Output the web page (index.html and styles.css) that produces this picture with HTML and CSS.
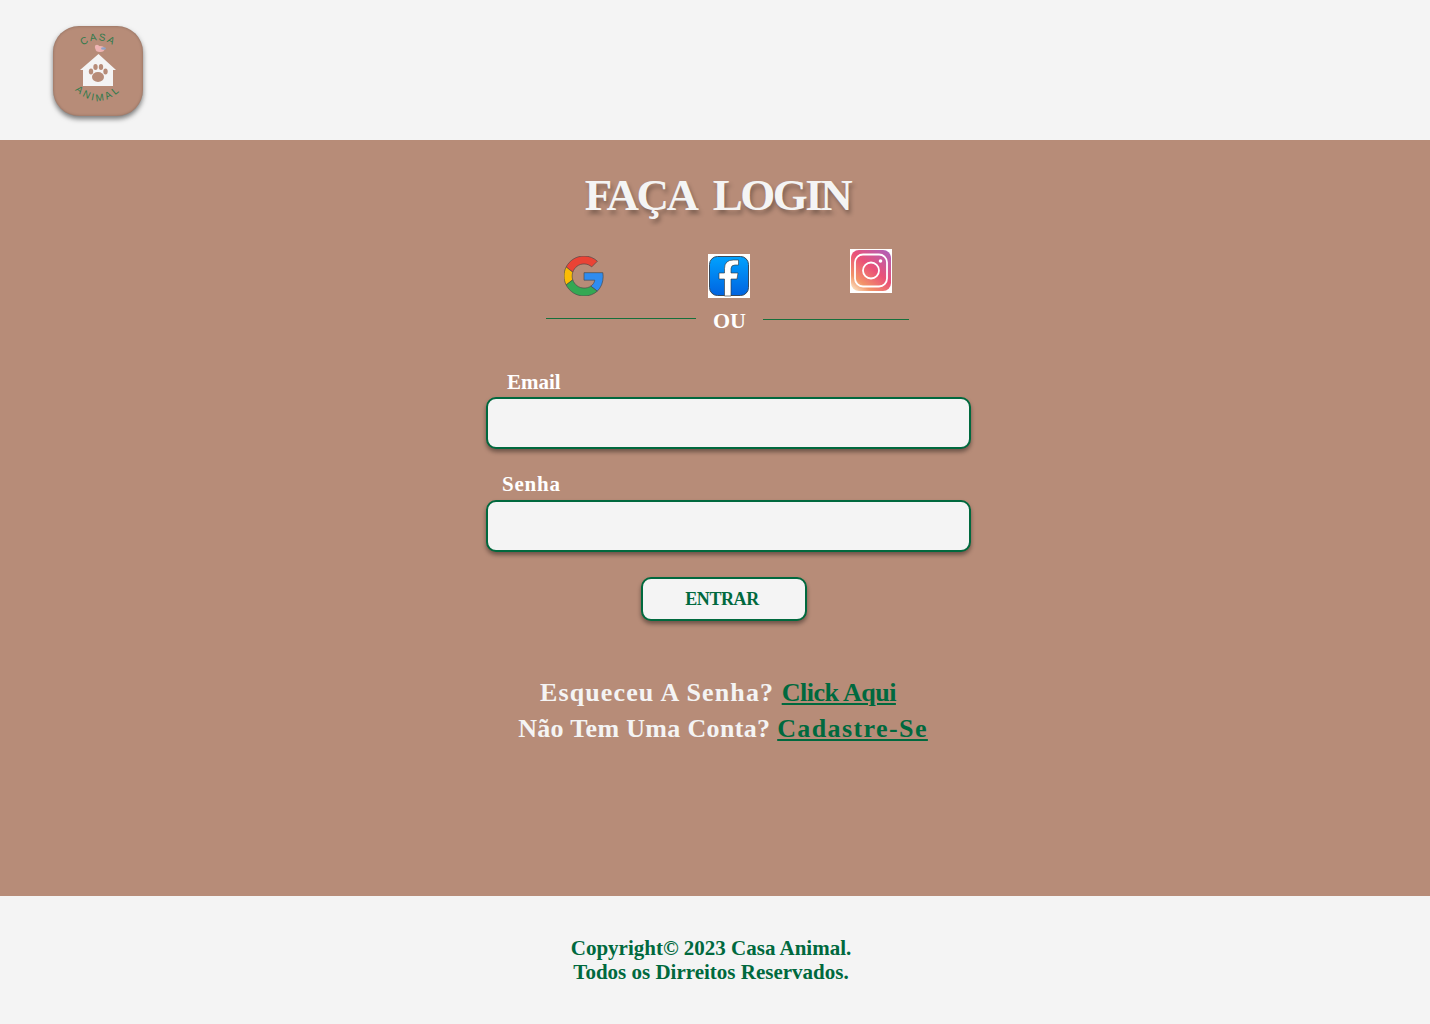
FILE: index.html
```html
<!DOCTYPE html>
<html lang="pt-BR">
<head>
    <meta charset="UTF-8">
    <meta name="viewport" content="width=device-width, initial-scale=1.0">
    <title>Casa Animal - Login</title>
    <link rel="stylesheet" href="styles.css">
</head>
<body>

<header class="topo">
    <div class="logo">
        <svg viewBox="0 0 90 90" width="90" height="90">
            <defs>
                <path id="arcoCima" d="M25 25 A24 24 0 0 1 65 25"/>
                <path id="arcoBaixo" d="M18 60 Q45 90 72 60"/>
            </defs>
            <text class="logo-texto"><textPath href="#arcoCima" startOffset="50%" text-anchor="middle">CASA</textPath></text>
            <text class="logo-texto logo-texto-baixo"><textPath href="#arcoBaixo" startOffset="50%" text-anchor="middle">ANIMAL</textPath></text>
            <ellipse cx="47" cy="23" rx="4.500" ry="3" fill="#eeb4b4"/>
            <circle cx="44" cy="21" r="2.200" fill="#eeb4b4"/>
            <ellipse cx="50.500" cy="22.500" rx="2.500" ry="1.300" fill="#8fa3c8"/>
            <path d="M45.500 28 L63 44 H60 V60 H30 V44 H27 Z" fill="#f4f4f4"/>
            <ellipse cx="45" cy="51" rx="6" ry="5" fill="#b78c78"/>
            <ellipse cx="38" cy="45.500" rx="2.200" ry="3" fill="#b78c78"/>
            <ellipse cx="42.500" cy="41" rx="2.200" ry="3" fill="#b78c78"/>
            <ellipse cx="48" cy="41" rx="2.200" ry="3" fill="#b78c78"/>
            <ellipse cx="52.500" cy="45.500" rx="2.200" ry="3" fill="#b78c78"/>
        </svg>
    </div>
</header>

<main class="principal">
    <h1>FAÇA LOGIN</h1>

    <div class="redes">
        <a href="#" class="rede rede-google">
            <svg viewBox="0 0 48 48" width="40" height="40">
                <g stroke="#4a4a4a" stroke-width="0.8">
                    <path fill="#ea4335" d="M24 9.5c3.54 0 6.71 1.22 9.21 3.6l6.85-6.85C35.9 2.38 30.47 0 24 0 14.62 0 6.51 5.38 2.56 13.22l7.98 6.19C12.43 13.72 17.74 9.5 24 9.5z"/>
                    <path fill="#2f8cf0" d="M46.98 24.55c0-1.57-.15-3.09-.38-4.55H24v9.02h12.94c-.58 2.96-2.26 5.48-4.78 7.18l7.73 6c4.51-4.18 7.09-10.36 7.09-17.65z"/>
                    <path fill="#fbbc05" d="M10.53 28.59c-.48-1.45-.76-2.99-.76-4.59s.27-3.14.76-4.59l-7.98-6.19C.92 16.46 0 20.12 0 24c0 3.88.92 7.54 2.56 10.78l7.97-6.19z"/>
                    <path fill="#34a853" d="M24 48c6.48 0 11.93-2.13 15.89-5.81l-7.73-6c-2.15 1.45-4.92 2.3-8.16 2.3-6.26 0-11.57-4.22-13.47-9.91l-7.98 6.19C6.51 42.62 14.62 48 24 48z"/>
                </g>
            </svg>
        </a>
        <a href="#" class="rede rede-face">
            <svg viewBox="0 0 42 44" width="42" height="44">
                <defs>
                    <linearGradient id="azulFace" x1="0" y1="0" x2="0" y2="1">
                        <stop offset="0" stop-color="#00a2ff"/>
                        <stop offset="1" stop-color="#0063e0"/>
                    </linearGradient>
                </defs>
                <rect width="42" height="44" fill="#fff"/>
                <rect x="1.5" y="2.5" width="39" height="39" rx="8" fill="url(#azulFace)" stroke="#3a4a5a"/>
                <path d="M23 42 V25 H29 L30 19 H23 V14.500 Q23 11 27 11 H30.500 V6 H25.500 Q16.500 6 16.500 14.500 V19 H11 V25 H16.500 V42 Z" fill="#fff" stroke="#333" stroke-width="0.6"/>
            </svg>
        </a>
        <a href="#" class="rede rede-insta">
            <svg viewBox="0 0 42 44" width="42" height="44">
                <defs>
                    <linearGradient id="corInsta" x1="0.9" y1="0" x2="0.1" y2="1">
                        <stop offset="0" stop-color="#b060b8"/>
                        <stop offset="0.45" stop-color="#ea5078"/>
                        <stop offset="0.8" stop-color="#f29468"/>
                        <stop offset="1" stop-color="#fbe0c0"/>
                    </linearGradient>
                </defs>
                <rect width="42" height="44" fill="#fff"/>
                <rect x="1" y="1" width="40" height="41" rx="8" fill="url(#corInsta)"/>
                <rect x="5" y="5.500" width="32" height="32" rx="8" fill="none" stroke="#fff" stroke-width="1.800"/>
                <circle cx="21" cy="21.500" r="8" fill="none" stroke="#fff" stroke-width="1.800"/>
                <circle cx="30.500" cy="12" r="1.800" fill="#fff"/>
            </svg>
        </a>
    </div>

    <div class="divisor">
        <span class="linha linha-esq"></span>
        <span class="ou">OU</span>
        <span class="linha linha-dir"></span>
    </div>

    <form class="formulario">
        <label for="email" class="rotulo-email">Email</label>
        <input type="email" id="email">
        <label for="senha" class="rotulo-senha">Senha</label>
        <input type="password" id="senha">
        <button type="button">ENTRAR</button>
    </form>

    <div class="ajuda">
        <p class="ajuda-senha">Esqueceu A Senha? <a href="#">Click Aqui</a></p>
        <p class="ajuda-conta">Não Tem Uma Conta? <a href="#">Cadastre-Se</a></p>
    </div>
</main>

<footer class="rodape">
    <p>Copyright© 2023 Casa Animal.<br>Todos os Dirreitos Reservados.</p>
</footer>

</body>
</html>
```
FILE: styles.css
```css
* {
    box-sizing: border-box;
}
body {
    margin: 0;
    font-family: "Liberation Serif", serif;
    background-color: #f4f4f4;
}
.topo {
    height: 140px;
    padding: 26px 53px 0;
}
.logo {
    width: 90px;
    height: 90px;
    border-radius: 26px;
    background-color: #b78c78;
    box-shadow: 0 3px 5px rgba(0, 0, 0, 0.5), inset 0 0 3px rgba(0, 0, 0, 0.25);
}
.logo svg {
    display: block;
}
.logo-texto {
    font-family: "Liberation Sans", sans-serif;
    font-size: 10px;
    letter-spacing: 1.5px;
    fill: #2f7a4b;
}
.logo-texto-baixo {
    letter-spacing: 2.5px;
}
.principal {
    height: 756px;
    padding-top: 30px;
    background-color: #b78c78;
    color: #f4f4f4;
}
h1 {
    margin: 0 0 0 5px;
    height: 50px;
    font-size: 45px;
    line-height: 50px;
    font-weight: bold;
    letter-spacing: -2.5px;
    word-spacing: 10px;
    text-align: center;
    text-shadow: 2px 4px 4px rgba(0, 0, 0, 0.3);
}
.redes {
    display: flex;
    height: 49px;
    margin: 29px 0 0 564px;
}
.rede {
    display: block;
}
.rede svg {
    display: block;
}
.rede-google {
    margin-top: 7px;
}
.rede-face {
    margin: 5px 0 0 104px;
}
.rede-insta {
    margin-left: 100px;
}
.divisor {
    display: flex;
    align-items: center;
    height: 41px;
    margin-left: 546px;
}
.linha {
    height: 1px;
    background-color: #17703c;
}
.linha-esq {
    width: 150px;
}
.linha-dir {
    width: 146px;
    margin-top: 2px;
}
.ou {
    width: 67px;
    padding-top: 5px;
    color: #fff;
    font-size: 22px;
    font-weight: bold;
    text-align: center;
}
.formulario {
    display: flex;
    flex-direction: column;
    width: 485px;
    margin: 31px 0 0 486px;
}
label {
    height: 24px;
    color: #fff;
    font-size: 21px;
    font-weight: bold;
    line-height: 24px;
}
.rotulo-email {
    margin: 0 0 3px 21px;
}
.rotulo-senha {
    margin: 23px 0 4px 16px;
    letter-spacing: 0.8px;
}
input {
    width: 485px;
    height: 52px;
    border: 2px solid #00693e;
    border-radius: 10px;
    background-color: #f4f4f4;
    box-shadow: 0 3px 4px rgba(0, 0, 0, 0.4);
}
button {
    width: 166px;
    height: 44px;
    margin: 25px 0 0 155px;
    padding: 0 4px 0 0;
    border: 2px solid #00693e;
    border-radius: 10px;
    background-color: #f4f4f4;
    box-shadow: 0 3px 4px rgba(0, 0, 0, 0.4);
    color: #00693e;
    font-family: "Liberation Serif", serif;
    font-size: 18px;
    font-weight: bold;
    letter-spacing: -0.4px;
}
.ajuda {
    margin-top: 54px;
    font-size: 26px;
    font-weight: bold;
    line-height: 36px;
    text-align: center;
}
.ajuda p {
    margin: 0;
}
.ajuda-senha {
    padding-left: 6px;
    letter-spacing: 1.1px;
}
.ajuda-senha a {
    letter-spacing: -0.5px;
}
.ajuda-conta {
    padding-left: 16px;
    letter-spacing: 0.33px;
}
.ajuda-conta a {
    letter-spacing: 1.4px;
}
.ajuda a {
    color: #00693e;
}
.rodape {
    height: 128px;
    padding-top: 40px;
    color: #00693e;
    font-size: 21px;
    font-weight: bold;
    line-height: 24px;
    text-align: center;
}
.rodape p {
    margin: 0 8px 0 0;
}
```
